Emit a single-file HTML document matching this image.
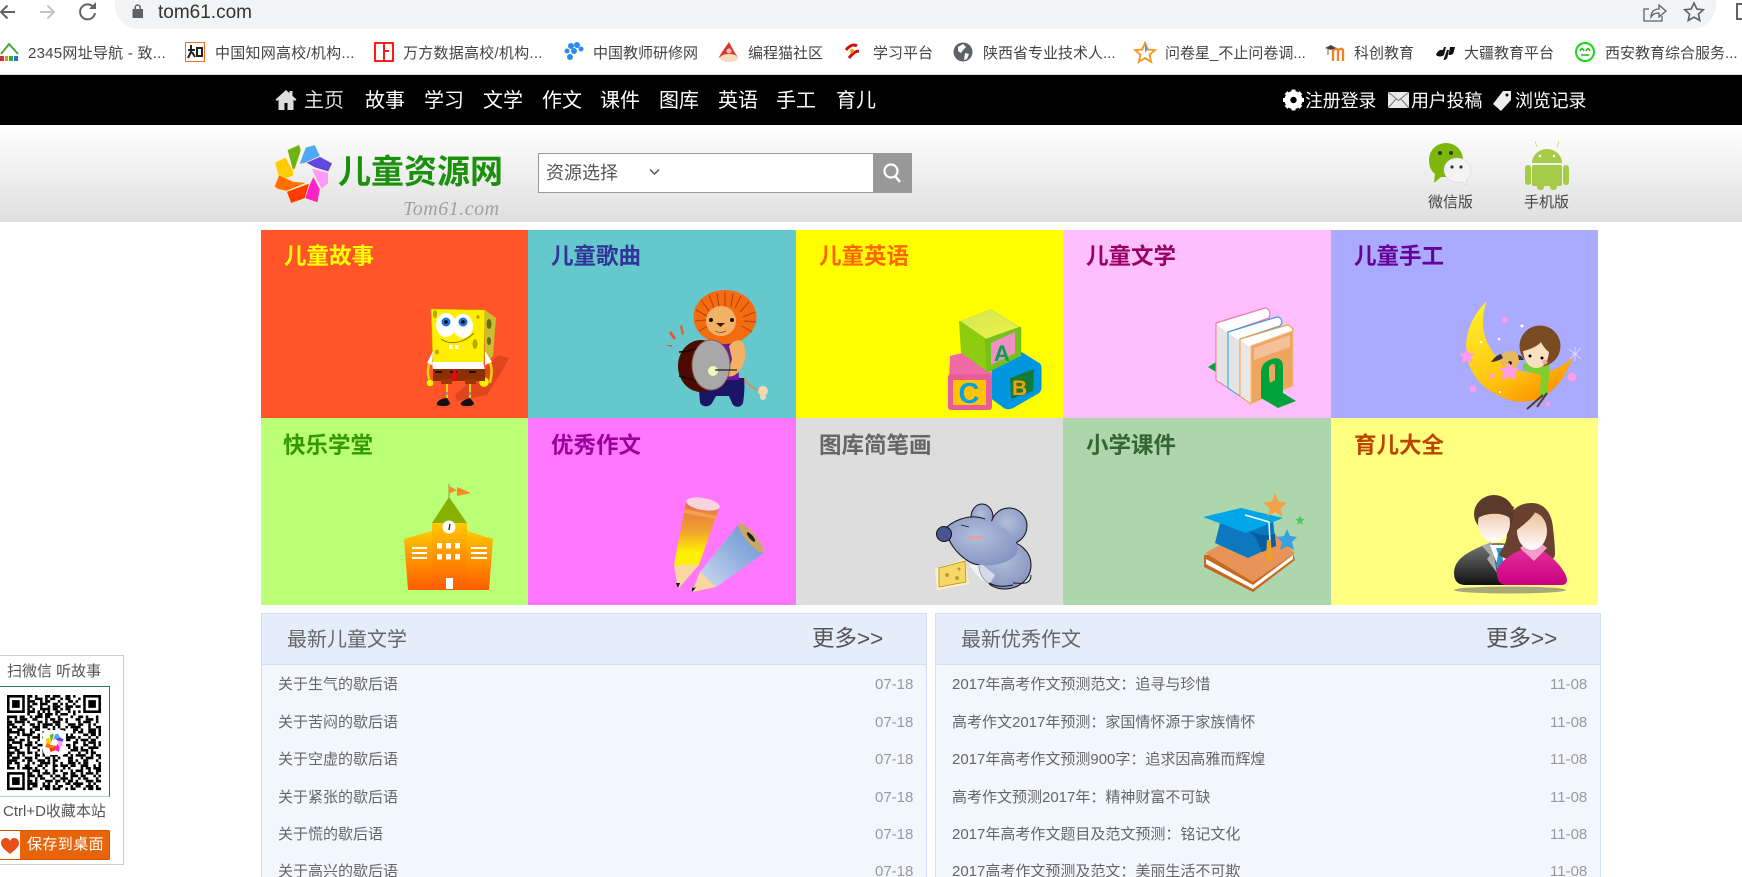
<!DOCTYPE html>
<html lang="zh"><head><meta charset="utf-8"><title>儿童资源网</title>
<style>
html,body{margin:0;padding:0;width:1742px;height:877px;overflow:hidden;background:#fff}
body{position:relative;font-family:"Liberation Sans","Noto Sans CJK SC",sans-serif}
#w{position:absolute;left:0;top:0;width:1742px;height:877px;overflow:hidden;filter:blur(.3px)}
#w>div,.a{position:absolute;white-space:nowrap}
svg{position:absolute;overflow:visible}
.b{font-size:15px;line-height:20px;top:43.5px;color:#444}
.n{font-size:20px;line-height:50px;top:76px;color:#fff}
.r{font-size:18px;line-height:50px;top:76px;color:#fff;letter-spacing:-.2px}
.c{width:268px;height:188px}
.t{font-size:22.5px;font-weight:700;line-height:30px;letter-spacing:0}
.p{background:#f2f7fe;border:1px solid #d3dff5;box-sizing:border-box;height:280px}
.h{background:#e5ecfa;border-bottom:1px solid #d3dff5;height:50px;position:absolute;left:0;right:0;top:0}
.l{font-size:15px;line-height:20px;color:#666}
.d{font-size:15px;line-height:20px;color:#999}
</style></head><body><div id="w">

<div style="left:115px;top:-20px;width:1601px;height:49px;background:#f1f3f4;border-radius:0 0 24px 24px"></div>
<div style="left:158px;top:1px;font-size:19px;line-height:24px;color:#333">tom61.com</div>

<div class="b" style="left:28px;letter-spacing:.25px">2345网址导航 - 致...</div>
<div class="b" style="left:215px;letter-spacing:.25px">中国知网高校/机构...</div>
<div class="b" style="left:403px;letter-spacing:.25px">万方数据高校/机构...</div>
<div class="b" style="left:593px">中国教师研修网</div>
<div class="b" style="left:748px">编程猫社区</div>
<div class="b" style="left:873px">学习平台</div>
<div class="b" style="left:983px">陕西省专业技术人...</div>
<div class="b" style="left:1165px">问卷星_不止问卷调...</div>
<div class="b" style="left:1354px">科创教育</div>
<div class="b" style="left:1464px">大疆教育平台</div>
<div class="b" style="left:1605px">西安教育综合服务...</div>
<div style="left:0;top:74px;width:1742px;height:1px;background:#ddd"></div>

<div style="left:0;top:75px;width:1742px;height:50px;background:#000"></div>
<div class="n" style="left:304px;color:#ddd">主页</div>
<div class="n" style="left:365px">故事</div>
<div class="n" style="left:424px">学习</div>
<div class="n" style="left:483px">文学</div>
<div class="n" style="left:542px">作文</div>
<div class="n" style="left:600px">课件</div>
<div class="n" style="left:659px">图库</div>
<div class="n" style="left:718px">英语</div>
<div class="n" style="left:776px">手工</div>
<div class="n" style="left:836px">育儿</div>
<div class="r" style="left:1305px">注册登录</div>
<div class="r" style="left:1411px">用户投稿</div>
<div class="r" style="left:1515px">浏览记录</div>

<div style="left:0;top:125px;width:1742px;height:97px;background:linear-gradient(#fff,#dfdfdf)"></div>
<div style="left:338px;top:151px;font-size:33px;font-weight:700;line-height:42px;color:#1b900c">儿童资源网</div>
<div style="left:403px;top:197px;font-family:'Liberation Serif',serif;font-style:italic;font-size:20px;line-height:24px;letter-spacing:.5px;color:#a0a0a0">Tom61.com</div>
<div style="left:538px;top:153px;width:336px;height:40px;box-sizing:border-box;background:#fff;border:1px solid #999"></div>
<div style="left:546px;top:160px;font-size:18px;line-height:26px;color:#555">资源选择</div>
<div style="left:873px;top:153px;width:39px;height:40px;background:#999"></div>
<div style="left:1428px;top:193px;font-size:15px;line-height:20px;color:#444">微信版</div>
<div style="left:1524px;top:193px;font-size:15px;line-height:20px;color:#444">手机版</div>

<div class="c" style="left:261px;top:230px;background:#ff5528"></div>
<div class="c" style="left:528px;top:230px;background:#64c8cc"></div>
<div class="c" style="left:796px;top:230px;background:#ff0"></div>
<div class="c" style="left:1063px;top:230px;background:#ffbfff"></div>
<div class="c" style="left:1331px;top:230px;width:267px;background:#aaf"></div>
<div class="c" style="left:261px;top:418px;height:187px;background:#bf7"></div>
<div class="c" style="left:528px;top:418px;height:187px;background:#f7f"></div>
<div class="c" style="left:796px;top:418px;height:187px;background:#ddd"></div>
<div class="c" style="left:1063px;top:418px;height:187px;background:#aed6ac"></div>
<div class="c" style="left:1331px;top:418px;height:187px;width:267px;background:#ffff80"></div>
<div class="t" style="left:284px;top:242px;color:#ff0">儿童故事</div>
<div class="t" style="left:551px;top:242px;color:#339">儿童歌曲</div>
<div class="t" style="left:819px;top:242px;color:#f60">儿童英语</div>
<div class="t" style="left:1086px;top:242px;color:#906">儿童文学</div>
<div class="t" style="left:1354px;top:242px;color:#609">儿童手工</div>
<div class="t" style="left:283px;top:431px;color:#390">快乐学堂</div>
<div class="t" style="left:551px;top:431px;color:#909">优秀作文</div>
<div class="t" style="left:819px;top:431px;color:#666">图库简笔画</div>
<div class="t" style="left:1086px;top:431px;color:#363">小学课件</div>
<div class="t" style="left:1354px;top:431px;color:#b40">育儿大全</div>

<div class="p" style="left:261px;top:613px;width:666px"><div class="h"></div></div>
<div class="p" style="left:935px;top:613px;width:666px"><div class="h"></div></div>
<div style="left:287px;top:626px;font-size:20px;line-height:28px;color:#666">最新儿童文学</div>
<div style="left:961px;top:626px;font-size:20px;line-height:28px;color:#666">最新优秀作文</div>
<div style="left:812px;top:624px;font-size:22.5px;line-height:30px;color:#555">更多&gt;&gt;</div>
<div style="left:1486px;top:624px;font-size:22.5px;line-height:30px;color:#555">更多&gt;&gt;</div>

<div class="l" style="left:278px;top:675px">关于生气的歇后语</div><div class="d" style="left:875px;top:675px">07-18</div>
<div class="l" style="left:278px;top:713px">关于苦闷的歇后语</div><div class="d" style="left:875px;top:713px">07-18</div>
<div class="l" style="left:278px;top:750px">关于空虚的歇后语</div><div class="d" style="left:875px;top:750px">07-18</div>
<div class="l" style="left:278px;top:788px">关于紧张的歇后语</div><div class="d" style="left:875px;top:788px">07-18</div>
<div class="l" style="left:278px;top:825px">关于慌的歇后语</div><div class="d" style="left:875px;top:825px">07-18</div>
<div class="l" style="left:278px;top:862px">关于高兴的歇后语</div><div class="d" style="left:875px;top:862px">07-18</div>

<div class="l" style="left:952px;top:675px">2017年高考作文预测范文：追寻与珍惜</div><div class="d" style="left:1550px;top:675px">11-08</div>
<div class="l" style="left:952px;top:713px">高考作文2017年预测：家国情怀源于家族情怀</div><div class="d" style="left:1550px;top:713px">11-08</div>
<div class="l" style="left:952px;top:750px">2017年高考作文预测900字：追求因高雅而辉煌</div><div class="d" style="left:1550px;top:750px">11-08</div>
<div class="l" style="left:952px;top:788px">高考作文预测2017年：精神财富不可缺</div><div class="d" style="left:1550px;top:788px">11-08</div>
<div class="l" style="left:952px;top:825px">2017年高考作文题目及范文预测：铭记文化</div><div class="d" style="left:1550px;top:825px">11-08</div>
<div class="l" style="left:952px;top:862px">2017高考作文预测及范文：美丽生活不可欺</div><div class="d" style="left:1550px;top:862px">11-08</div>

<div style="left:-1px;top:655px;width:125px;height:210px;box-sizing:border-box;border:1px solid #ccc;background:#fff"></div>
<div style="left:7px;top:662px;font-size:15px;line-height:20px;color:#555">扫微信 听故事</div>
<div style="left:-1px;top:686px;width:111px;height:111px;box-sizing:border-box;border-top:1px solid #2a7a6a;border-right:1.5px solid #2a7a6a;border-bottom:1px solid #b8cfc9;background:#fff"></div>
<div style="left:3px;top:802px;font-size:15px;line-height:20px;color:#555">Ctrl+D收藏本站</div>
<div style="left:-1px;top:830px;width:111px;height:30px;background:#e8640a;border-radius:2px;box-shadow:inset 0 0 0 1px #d25500"></div>
<div style="left:0;top:831px;width:20px;height:28px;background:#fff"></div>
<div style="left:27px;top:834px;font-size:15px;line-height:22px;letter-spacing:.4px;color:#fff">保存到桌面</div>

<svg style="left:0;top:0" width="1742" height="877" viewBox="0 0 1742 877">
<defs>
<linearGradient id="gs" x1="0" y1="0" x2="0" y2="1"><stop offset="0" stop-color="#ffc800"/><stop offset="1" stop-color="#ff5c00"/></linearGradient>
<linearGradient id="gm" x1="0" y1="0" x2=".6" y2="1"><stop offset="0" stop-color="#fff428"/><stop offset=".7" stop-color="#ffc410"/><stop offset="1" stop-color="#ff9800"/></linearGradient>
<linearGradient id="gp" x1="0" y1="0" x2="0" y2="1"><stop offset="0" stop-color="#e8704a"/><stop offset=".45" stop-color="#f0a030"/><stop offset=".8" stop-color="#fff000"/></linearGradient>
<linearGradient id="gb" x1="0" y1="1" x2="1" y2="0"><stop offset="0" stop-color="#cdd8f0"/><stop offset="1" stop-color="#5f8fd0"/></linearGradient>
<linearGradient id="gf" x1="0" y1="0" x2="0" y2="1"><stop offset="0" stop-color="#eebf98"/><stop offset="1" stop-color="#fff"/></linearGradient>
<linearGradient id="gd" x1="0" y1="0" x2="0" y2="1"><stop offset="0" stop-color="#777"/><stop offset="1" stop-color="#111"/></linearGradient>
<linearGradient id="gk" x1="0" y1="0" x2="0" y2="1"><stop offset="0" stop-color="#e8309c"/><stop offset="1" stop-color="#c80080"/></linearGradient>
<linearGradient id="gt" x1="0" y1="0" x2="1" y2="1"><stop offset="0" stop-color="#d6e850"/><stop offset="1" stop-color="#eef24a"/></linearGradient>
<radialGradient id="gr" cx=".45" cy=".4" r=".65"><stop offset="0" stop-color="#b4bedc"/><stop offset="1" stop-color="#8494c0"/></radialGradient>
</defs>

<!-- browser chrome icons -->
<g fill="none" stroke="#5f6368" stroke-width="2">
<path d="M15 12H1M7.500 5.500L1 12l6.500 6.500"/>
<path stroke="#c2c4c7" d="M40 12h14M47.500 5.500L54 12l-6.500 6.500"/>
<path d="M94 8A7.500 7.500 0 1 0 95 13"/><path fill="#5f6368" stroke="none" d="M89 9h7V2z"/>
<path stroke-width="1.300" d="M1649 9h-5v12h18v-5M1651 17c0-5 3-8 8-8V5l7 6-7 6v-4c-4 0-6 1-8 4z"/>
<path stroke-width="1.600" d="M1694 3l2.800 6 6.500.7-4.900 4.400 1.400 6.400-5.800-3.300-5.800 3.300 1.400-6.400-4.900-4.400 6.500-.7z"/>
<path stroke-width="2" d="M1743 4h-6v15h6"/>
</g>
<path fill="#5f6368" d="M132.500 9h10.500v9h-10.500zM134.500 9V7.500a3.200 3.200 0 0 1 6.400 0V9h-1.500V7.500a1.700 1.700 0 0 0-3.400 0V9z"/>

<!-- bookmark icons -->
<path fill="none" stroke="#4ba33c" stroke-width="2" d="M1 54l8-10 9 10"/><path fill="#c33" d="M0 56h4v5H0z"/><path fill="#d90" d="M5 56h3v5H5z"/><path fill="#3a3" d="M9 56h4v5H9z"/><path fill="#27c" d="M14 56h4v5h-4z"/>
<rect x="185.500" y="42.500" width="19" height="19" fill="#fff" stroke="#f07020"/><path fill="none" stroke="#222" stroke-width="2" d="M188 50h7M191 45v7l-3 6M192 52l3 5M197 48h5v8h-5z"/>
<path fill="none" stroke="#f00" stroke-width="1.800" d="M375 43h18v18h-18zM384 43v18M384 51h5"/>
<g fill="#2a8cf0"><circle cx="571" cy="46" r="3"/><circle cx="577" cy="45" r="3"/><circle cx="581" cy="49" r="2.500"/><circle cx="574" cy="51" r="3"/><circle cx="567" cy="51" r="2.500"/><circle cx="570" cy="57" r="3"/></g>
<path fill="#d43a2a" d="M729 42l6 11 3 4-4 4h-10l-5-4 3-5z"/><ellipse cx="729" cy="58" rx="9" ry="4" fill="#f3dcc0"/><circle cx="729" cy="51" r="2.500" fill="#fbb"/>
<path fill="none" stroke="#d01010" stroke-width="3" d="M846 50c4-5 8-6 11-4M849 58c3-4 6-7 10-7"/><circle cx="852" cy="51" r="2" fill="#f0a000"/>
<circle cx="963" cy="52" r="9.500" fill="#5f6368"/><path fill="#fff" d="M958 47l5-3 3 3-3 3-2 3-3-2zM965 53l4 1-2 5-3 1z"/>
<path fill="none" stroke="#f59a30" stroke-width="2" d="M1145 43l2.800 6.500 7 .7-5.300 4.600 1.600 7-6.100-3.700-6.100 3.700 1.600-7-5.300-4.600 7-.7z"/><path fill="#3a9cf0" d="M1145 43l2.500 6.500-2.500 3z"/>
<path fill="none" stroke="#f08020" stroke-width="2.300" d="M1333 61v-11M1333 51c2-3 5-3 5 0v10M1338 51c2-3 5-3 5 0v10"/><path fill="#444" d="M1325 48l6-3 5 3-5 2z"/><path stroke="#666" fill="none" d="M1328 49v6"/>
<path fill="#111" d="M1436 55c1-4 5-6 7-5l1-3h2l-2 8c-2 2-6 2-8 0zM1447 50h2l-1.500 7c-.5 2-2 3-4 3zM1450 47h5l-1.500 6c-1 2-3 2-5 2z"/>
<circle cx="1585" cy="52" r="9" fill="#fff" stroke="#18d818" stroke-width="2"/><path fill="none" stroke="#18b818" stroke-width="1.500" d="M1580 51c1-3 3-3 4 0M1586 51c1-3 3-3 4 0M1581 55h8"/>

<!-- nav icons -->
<path fill="#ddd" d="M286 90l-10.500 9.500 1.500 1.500 1.500-1.300V110h6v-7h3v7h6V99.700l1.500 1.300 1.500-1.500-4-3.600V91h-3v2.200z"/>
<g transform="translate(1293.500 100)"><circle r="6.500" fill="none" stroke="#fff" stroke-width="5"/><g fill="#fff"><rect x="-2" y="-10.500" width="4" height="21"/><rect x="-2" y="-10.500" width="4" height="21" transform="rotate(45)"/><rect x="-2" y="-10.500" width="4" height="21" transform="rotate(90)"/><rect x="-2" y="-10.500" width="4" height="21" transform="rotate(135)"/></g><circle r="3.200" fill="#000"/></g>
<rect x="1388" y="92" width="21" height="16" fill="#e8e8e8"/><path fill="none" stroke="#777" d="M1388 92l10.500 8.500L1409 92M1388 108l8-9M1409 108l-8-9"/>
<path fill="#eee" d="M1503 91h8v9l-10 11-8-7z"/><circle cx="1507" cy="95" r="1.500" fill="#000"/>

<!-- logo -->
<g transform="translate(265 130) scale(.3333)" stroke="#fff6c0" stroke-width="1.500" stroke-linejoin="round">
<polygon fill="#ffcc00" points="30,98 62,82 85,125 85,137 60,147 42,145"/>
<polygon fill="#6eb410" points="67,60 103,44 108,62 90,116 83,120"/>
<polygon fill="#50a8f8" points="122,52 150,45 165,78 118,100 103,102"/>
<polygon fill="#6048e0" points="123,98 165,80 202,100 190,125 150,113"/>
<polygon fill="#ff98ff" points="140,115 190,128 190,160 170,178 148,135"/>
<polygon fill="#ff20c8" points="145,140 165,178 158,218 120,205 133,165"/>
<polygon fill="#ff3c00" points="133,160 120,205 78,220 65,185"/>
<polygon fill="#ff7000" points="28,170 42,135 85,155 125,158 65,183 40,178"/>
</g>

<!-- search -->
<path fill="none" stroke="#555" stroke-width="1.500" d="M650 169.500l4.500 4.500 4.500-4.500"/>
<circle cx="891" cy="171" r="6.500" fill="none" stroke="#fff" stroke-width="2.200"/><path stroke="#fff" stroke-width="2.500" d="M895 176l5 6"/>

<!-- wechat -->
<path fill="#7cb70a" d="M1446 143c9 0 17 7 17 17 0 11-8 17-17 17-2 0-4 0-5 0l-7 6 1-9c-4-3-6-8-6-14 0-10 8-17 17-17z"/>
<circle cx="1440" cy="153" r="2" fill="#333"/><circle cx="1451" cy="153" r="2" fill="#333"/>
<path fill="#f4f4f4" stroke="#ccc" stroke-width=".5" d="M1457 158c8 0 14 6 14 12 0 5-2 8-5 10l1 5-6-3c-8 2-17-4-17-12 0-7 6-12 13-12z"/>
<circle cx="1452" cy="167" r="1.600" fill="#333"/><circle cx="1461" cy="167" r="1.600" fill="#333"/>

<!-- android -->
<g fill="#a6cb48"><path d="M1532 163a15 14 0 0 1 30 0z"/><rect x="1532" y="165" width="30" height="21" rx="2"/><rect x="1525" y="165" width="6" height="20" rx="3"/><rect x="1563" y="165" width="6" height="20" rx="3"/><rect x="1537" y="182" width="7" height="8" rx="3"/><rect x="1550" y="182" width="7" height="8" rx="3"/></g>
<path stroke="#c4d88a" stroke-width="1" d="M1537 147l-2-6M1557 147l2-6"/><circle cx="1540" cy="156" r="1.300" fill="#fff"/><circle cx="1554" cy="156" r="1.300" fill="#fff"/>

<!-- spongebob -->
<g transform="translate(425 307)">
<path fill="#e0461e" d="M30 88l44-40 10 3-8 15-14 22-30 6z"/>
<path fill="#c9c030" d="M60 3l11 8-3 38-8 7z"/><ellipse cx="64" cy="17" rx="2.500" ry="5" fill="#6a6a10"/><ellipse cx="64" cy="34" rx="2" ry="4" fill="#6a6a10"/>
<path fill="#ffee00" stroke="#c0b000" stroke-width=".6" d="M6 2l54 1-1 53-51 1z"/>
<g fill="#b5a800"><ellipse cx="10" cy="7" rx="2" ry="4"/><ellipse cx="50" cy="37" rx="2.500" ry="5"/><ellipse cx="12" cy="45" rx="2" ry="2.500"/><ellipse cx="53" cy="10" rx="1.500" ry="2"/></g>
<ellipse cx="21" cy="18" rx="10" ry="12" fill="#fff"/><ellipse cx="38" cy="19" rx="10" ry="12" fill="#fff"/>
<circle cx="21" cy="15" r="4.500" fill="#1c72d8"/><circle cx="38" cy="15" r="4.500" fill="#1c72d8"/><circle cx="21" cy="15" r="1.800"/><circle cx="38" cy="15" r="1.800"/>
<path fill="none" stroke="#8a7a00" stroke-width="1" d="M16 32c8 6 22 5 33-6"/><rect x="24" y="38" width="3.500" height="4" fill="#fff"/><rect x="30" y="38" width="3.500" height="4" fill="#fff"/>
<path fill="#fff" d="M7 55l51 0 2 8H8z"/><path fill="#fff" d="M8 44l-6 12 5 2zM60 44l7 11-7 3z"/>
<path fill="none" stroke="#e8d800" stroke-width="2.500" d="M4 57c-2 7-1 14 2 20M65 56c3 7 1 14 0 20"/><circle cx="5" cy="76" r="3.500" fill="#ffee00" stroke="#a09000" stroke-width=".5"/><circle cx="59" cy="75" r="5" fill="#ffee00" stroke="#a09000" stroke-width=".5"/>
<path fill="#8c3000" d="M8 62h52v12H8z"/><rect x="16" y="72" width="11" height="5" fill="#9c3808"/><rect x="40" y="72" width="11" height="5" fill="#9c3808"/>
<path fill="#111" d="M10 64h7v2h-7zM25 64h7v2h-7zM44 64h7v2h-7z"/><path fill="#f00010" d="M27 62h5l-1 3 2 6-3.500 3-3.500-3 2-6z"/>
<path stroke="#eecf00" stroke-width="2" d="M22 77v14M45 77v14"/><path stroke="#8888cc" stroke-width="2" d="M22 85v3M45 85v3"/>
<path fill="#111" d="M12 96c2-4 8-5 10-5l3 5c0 2-2 3-6 3s-8 0-7-3zM36 96c2-3 6-4 9-5l4 5c0 2-2 3-6 3s-8 0-7-3z"/>
</g>

<!-- lion -->
<g transform="translate(665 290)">
<path fill="#f05030" d="M4 43l5 7 2-2-5-7zM15 36l2 9 2-1-2-9zM0 55l7 2 0-2z"/>
<path fill="none" stroke="#f08040" stroke-width="1.500" d="M79 88c3 6 10 12 20 14"/><circle cx="98" cy="101" r="5" fill="#f4d8b0"/><circle cx="98" cy="107" r="3" fill="#f4d8b0"/>
<path fill="#1c1464" d="M33 88h46c1 10 0 18-1 25-2 5-9 5-11 0l-3-7H51l-4 7c-3 5-11 4-12-1z"/>
<path fill="#6a1a9c" d="M49 48h23l2 42H49z"/>
<ellipse cx="60" cy="27" rx="31.500" ry="27" fill="#f46c12"/>
<g stroke="#b83c08" stroke-width="1" fill="none"><path d="M60 2v15M52 3l2 14M68 3l-2 14M44 5l5 13M76 6l-6 12M36 10l8 11M84 12l-9 10M31 20l11 6M90 22l-12 5M30 31l11-1M91 32l-12-1M34 41l9-5M87 42l-10-6"/></g>
<ellipse cx="56" cy="31" rx="15" ry="15" fill="#f2b266"/>
<circle cx="46" cy="30" r="2" fill="#111"/><circle cx="67" cy="30" r="2" fill="#111"/><path fill="#3a1a10" d="M51 33h9l-4.500 4z"/><path fill="none" stroke="#a06030" d="M50 41c3 2 7 2 11 0"/>
<path fill="#f2b266" d="M64 56c7-8 13-7 15-1 4 10 0 24-9 30-5 3-9 1-11-2 4-4 7-8 8-14z"/>
<ellipse cx="36" cy="76" rx="23" ry="26" fill="#4c0a00"/><path stroke="#1c0500" stroke-width="1.500" fill="none" d="M14 62c6 0 14-2 22-5M14 86c6 1 14 4 20 7"/>
<ellipse cx="46" cy="75" rx="19" ry="25" fill="#a8a8a8" stroke="#8c5a50"/>
<circle cx="48" cy="81" r="5" fill="#f0f8c0"/><path stroke="#222" stroke-width="1.300" d="M50 80l22 0"/>
</g>

<!-- blocks -->
<g transform="translate(948 310)" stroke-linejoin="round">
<path fill="#0096e0" stroke="#0096e0" stroke-width="3" d="M45 50l26-8 19 12c2 1 2 3 2 5v19c0 2-1 3-2 4l-26 15c-3 1-5 1-7 0l-12-9z"/>
<path fill="#107c38" d="M62 68l24-9-1 22-22 8z"/><text x="64" y="85" font-family="Liberation Sans" font-weight="700" font-size="21" fill="#ffa000">B</text>
<path fill="#f06aa8" d="M2 46l12-3 30 20v6H1z"/>
<rect x="0" y="64" width="44" height="36" rx="3" fill="#e85c98"/><rect x="5" y="70" width="33" height="25" fill="#ffc400"/><text x="10.500" y="93" font-family="Liberation Sans" font-weight="700" font-size="29" fill="#00a0e8">C</text>
<path fill="url(#gt)" stroke="#d6e850" stroke-width="2" d="M12 12L43 0l29 18-34 12z"/>
<path fill="#8ecc10" stroke="#8ecc10" stroke-width="2" d="M12 12l26 18 2 31L14 42z"/>
<path fill="#76c01a" stroke="#76c01a" stroke-width="2.500" d="M38 30l34-12 0 27-32 16z"/>
<path fill="#f090c4" d="M43 33l24-11 0 21-24 12z"/><text x="46" y="51" font-family="Liberation Sans" font-weight="700" font-size="22" fill="#00a050">A</text>
</g>

<!-- books -->
<g transform="translate(1208 308)">
<path fill="#00a33a" d="M0 59l8-5v10z"/>
<path fill="#fff" stroke="#f07aa8" stroke-width="1.200" d="M8 15L57 0c3 0 5 3 5 6l-1 4-41 14v56L8 72z"/>
<path fill="#e4e4e4" d="M9 17l10 7v55l-10-8z"/>
<path fill="#fff" stroke="#3aa0e0" stroke-width="1.200" d="M20 24l49-15c3 0 5 2 5 6l-2 3-40 13v57l-12-8z"/>
<path fill="#e4e4e4" d="M21 26l10 6v55l-10-7z"/>
<path fill="#fff" stroke="#f09a50" stroke-width="1.200" d="M32 31l47-14c3 0 6 3 6 6L43 38v58l-11-8z"/>
<path fill="#e8e8e8" d="M33 33l9 6v55l-9-7z"/>
<path fill="#eda560" stroke="#f6c080" stroke-width=".8" d="M43 38l42-15v55L43 96z"/>
<path fill="#f4c09a" d="M46 40l36-13v12l-36 13z"/>
<path fill="#00a33a" d="M53 66c0-10 5-13 11-15 6-2 11 0 11 8v26l13 8-18 7-17-10z"/><path fill="#eda560" d="M61 61c0-3 2-5 4-5s2 2 2 4v12l-5 3c-1-4-1-9-1-14z"/>
</g>

<!-- moon -->
<g transform="translate(1463 301)">
<path fill="url(#gm)" d="M24 0C-8 30-6 85 50 100c30 5 50-15 60-45-15 17-36 20-56 14C28 60 12 30 24 0z"/>
<path fill="#7bd030" d="M60 63l18-3 9 4-3 30-7 2 1-22-18-5z"/>
<path stroke="#5a3a20" stroke-width="2" fill="none" d="M80 94l-16 14M84 92l-10 14"/>
<circle cx="77" cy="45" r="20.500" fill="#7a4a20"/><path fill="#fbe0c0" d="M60 50c6-1 15-5 18-9 2 4 5 8 8 10-1 11-6 16-13 16s-12-7-13-17z"/>
<circle cx="67" cy="55" r="1.500"/><circle cx="79" cy="57" r="1.500"/><circle cx="82" cy="61" r="2.500" fill="#f8a0a0"/>
<ellipse cx="47" cy="59" rx="10" ry="9" fill="#e8b860"/><path d="M38 53c-4 1-8 5-10 8 4 0 9-2 12-4z" fill="#333"/><path d="M55 54c3 0 5 3 6 5l-5 0z" fill="#333"/><circle cx="47" cy="62" r="1.800"/>
<g fill="#ff9ce6"><path d="M46 61l3 6 7 0-4.500 5 2 7-7.500-3-7.500 3 2-7-4.500-5 7 0z"/><path d="M4 47l2.500 5 5.500 .5-4 4 1.500 6-5.500-3-5.500 3 1.500-6-4-4 5.500-.5z"/><circle cx="42" cy="19" r="3"/><circle cx="10" cy="88" r="3.500"/><circle cx="109" cy="76" r="4.500"/><circle cx="85" cy="103" r="2.500"/><circle cx="29" cy="75" r="2.500"/></g>
<g fill="#fff"><circle cx="59" cy="25" r="1.500"/><circle cx="36" cy="38" r="1.300"/><circle cx="18" cy="41" r="1.300"/><circle cx="37" cy="91" r="1"/></g>
<g stroke="#e4e0ff" stroke-width=".8"><path d="M109 53l6 0M112 46l0 14M106 48l12 10M118 47l-11 11"/></g>
</g>

<!-- school -->
<g transform="translate(404 484)">
<path stroke="#8a7a50" stroke-width=".8" d="M45 0v14"/><path fill="#ff8a20" d="M45 2l8 4-8 4zM53 3l14 6-14 3z"/>
<path fill="url(#gs)" d="M0 55l28-8v59H4z"/><path fill="url(#gs)" d="M89 55l-26-8v59h22z"/><path fill="url(#gs)" d="M28 39h35v67H28z"/>
<path fill="#88b000" d="M28 39L45 13l18 26z"/>
<circle cx="45" cy="43" r="6.500" fill="#fff"/><path stroke="#222" stroke-width="1.300" d="M45 46l1-6"/>
<g fill="#fff"><rect x="33" y="59" width="5" height="5.500"/><rect x="42" y="59" width="5" height="5.500"/><rect x="51" y="59" width="5" height="5.500"/><rect x="33" y="70" width="5" height="5.500"/><rect x="42" y="70" width="5" height="5.500"/><rect x="51" y="70" width="5" height="5.500"/><rect x="42" y="94" width="7" height="11"/>
<rect x="8" y="63" width="15" height="2"/><rect x="8" y="68" width="15" height="2"/><rect x="8" y="73" width="15" height="2"/><rect x="67" y="63" width="16" height="2"/><rect x="67" y="68" width="16" height="2"/><rect x="67" y="73" width="16" height="2"/></g>
</g>

<!-- pencils -->
<g transform="translate(674 495)">
<path fill="url(#gp)" d="M12 7l33 6-20 57L0 70z"/><path fill="#f8d8a0" d="M0 70l25 0L4 94z"/><path fill="#111" d="M2 88l4 0-2 5z"/>
<path fill="#f4a050" d="M11 14l32 7-1 3-32-6z"/><ellipse cx="29" cy="9" rx="17" ry="6" fill="#f8d4e0" transform="rotate(10 29 9)"/>
<path fill="url(#gb)" d="M65 29l25 29-48 34-16-15z"/><path fill="#f8d8a0" d="M26 77l16 15-24 5z"/><path fill="#111" d="M18 93l4-.5-4 4.500z"/>
<ellipse cx="77" cy="43" rx="5" ry="19" fill="#c8a868" transform="rotate(-40 77 43)"/><ellipse cx="77" cy="42" rx="2" ry="6" fill="#222" transform="rotate(-40 77 42)"/>
</g>

<!-- mouse -->
<g transform="translate(935 503)" stroke="#111" stroke-width="1">
<ellipse cx="47" cy="14" rx="11" ry="13" fill="url(#gr)"/><ellipse cx="74" cy="23" rx="18" ry="18" fill="url(#gr)"/>
<ellipse cx="70" cy="62" rx="26" ry="24" fill="url(#gr)"/>
<path fill="url(#gr)" d="M8 28C16 18 34 10 50 16c16 4 32 18 33 30 0 10-18 18-38 16C30 60 14 44 8 28z" stroke="none"/>
<path fill="none" d="M8 28C16 18 34 10 50 16M44 62C30 60 18 46 14 36"/>
<path fill="#fff" stroke="none" opacity=".6" d="M34 62c6 8 10 14 20 20l6-10-12-10z"/>
<circle cx="9" cy="31" r="7.500" fill="#4a5490"/>
<path fill="none" d="M78 80c8 0 18 3 18-8M54 80c8 4 14 4 24 2"/>
<path fill="#fff2c0" stroke="none" d="M0 66l30-10 4 25-32 6z"/>
<path fill="#f5d868" d="M4 65l26-7 1 21-27 5z" stroke="#b09020" stroke-width=".8"/><g fill="#c09a30" stroke="none"><circle cx="12" cy="72" r="2"/><circle cx="22" cy="75" r="2"/><circle cx="24" cy="66" r="1.500"/></g>
<path fill="#e0a0a8" stroke="none" d="M32 33h16v3H32z"/>
<path fill="none" stroke-width=".8" d="M26 22l8 2"/>
</g>

<!-- cap -->
<g transform="translate(1203 493)">
<path fill="#c86820" d="M1 62v12l49 25 42-32-2-7z"/><path fill="#fff" d="M3 66l47 26 40-30v4L50 96 3 71z"/><path fill="#e89458" d="M2 60l58-31 32 31-42 29z"/>
<path fill="#0c78c0" d="M18 26l-6 24 33 15 28-13-3-24z"/><path fill="#085ea0" d="M40 33c6 4 14 12 32 8l1 12-14 6-6-14z"/>
<path fill="#00a6e8" d="M0 24l38-9 42 10-37 15z"/>
<path stroke="#fff" stroke-width="1.500" fill="none" d="M42 22l24 7 1 20"/><path fill="#f0a020" d="M64 47h4l1 20-3 2-3-2z"/>
<path fill="#f4a248" d="M72 0l3.500 8.500 8.500 1-6.500 6 2 8-7.500-4.500-7.500 4.500 2-8-6.500-6 8.500-1z"/>
<path fill="#3aa0e0" d="M84 36l3 7 7 1-5 5 2 8-7-4-7 4 2-8-5-5 7-1z"/>
<path fill="#50c860" d="M97 22l1.200 3.500 3.500.5-2.700 2.500.8 3.500-2.800-2-2.800 2 .8-3.500-2.700-2.500 3.500-.5z"/>
</g>

<!-- couple -->
<g transform="translate(1454 495)">
<ellipse cx="56" cy="95" rx="56" ry="3.500" fill="#a8a878"/>
<path fill="url(#gd)" d="M0 78c0-14 14-21 30-28 10-3 24-3 34 3l8 37H12C4 90 0 86 0 78z"/>
<path fill="#aaa" d="M28 51l9-4 2 7 4 24-10-14 3-4zM62 52l-8-5-3 7-1 22z"/>
<path fill="#fff" d="M36 50h20l-9 30z"/><path fill="#2c96c8" d="M42 53h8l-2 6 2 12-4 9-4-9 2-12z"/>
<path fill="#6a4030" d="M76 0c-18 0-25 12-25 30 0 12-7 18-8 22 8 6 22 8 38 7 12-1 18-2 18-8 0-8-1-18-2-26 C96 10 88 0 76 0z" transform="translate(2 8)"/>
<ellipse cx="40" cy="19" rx="20" ry="19" fill="#5a3a2a"/><ellipse cx="40" cy="28" rx="16" ry="19" fill="url(#gf)"/><path fill="#5a3a2a" d="M23 24c6-6 26-8 34 0l3-12-20-10-17 10z"/>
<path fill="url(#gk)" d="M43 80c-2-14 20-24 34-29l10 4c12 6 26 22 26 30 0 4-3 5-6 5H52c-5 0-9-4-9-10z"/>
<path fill="#f0a0c8" d="M66 53l14 13 13-13-5-4H71z"/>
<ellipse cx="78" cy="36" rx="15" ry="19" fill="url(#gf)"/><path fill="#6a4030" d="M62 36c3-3 14-10 20-20-8-2-18 2-22 10z"/>
</g>

<!-- QR -->
<g transform="translate(7 695) scale(2.54 2.57)" fill="none" stroke="#000">
<path stroke-dasharray="2 1 1 3 2 1 3 2" d="M8 .500H29"/><path stroke-dasharray="1 2 3 1 1 1 2 2 1" d="M8 1.500H29"/><path stroke-dasharray="3 2 1 1 2 3 1" d="M8 2.500H29"/><path stroke-dasharray="1 1 2 1 3 2 2 1 1" d="M8 3.500H29"/><path stroke-dasharray="2 3 1 2 1 1 3" d="M8 4.500H29"/><path stroke-dasharray="1 1 1 2 4 1 2" d="M8 5.500H29"/><path stroke-dasharray="3 1 1 1 1 1 1 2 2" d="M8 6.500H29"/><path stroke-dasharray="1 3 2 1 3 1 1" d="M8 7.500H29"/>
<path stroke-dasharray="4 1 2 2 1 1 3 1 2 3 1" d="M0 8.500H37"/><path stroke-dasharray="1 2 1 1 3 2 2 3 1 1 2" d="M0 9.500H37"/><path stroke-dasharray="2 1 4 1 1 3 2 1 1 2 3" d="M0 10.500H37"/><path stroke-dasharray="3 3 1 2 2 1 1 1 4 1 2" d="M0 11.500H37"/><path stroke-dasharray="1 1 2 1 1 4 3 1 2 2 1" d="M0 12.500H37"/><path stroke-dasharray="2 2 3 2 1 1 2 3 1 1 1" d="M0 13.500H37"/><path stroke-dasharray="5 1 1 2 2 3 1 1 2 1 2" d="M0 14.500H37"/><path stroke-dasharray="1 3 1 1 4 2 1 2 1 3 1" d="M0 15.500H37"/><path stroke-dasharray="2 1 1 4 1 1 3 1 2 1 2" d="M0 16.500H37"/><path stroke-dasharray="3 2 2 1 1 3 1 2 3 1 1" d="M0 17.500H37"/><path stroke-dasharray="1 1 4 2 2 1 1 3 1 2 2" d="M0 18.500H37"/><path stroke-dasharray="2 3 1 1 3 2 2 1 1 3 1" d="M0 19.500H37"/><path stroke-dasharray="4 1 1 2 1 1 2 4 1 1 2" d="M0 20.500H37"/><path stroke-dasharray="1 2 2 3 1 3 1 1 3 2 1" d="M0 21.500H37"/><path stroke-dasharray="3 1 3 1 2 1 1 2 2 1 4" d="M0 22.500H37"/><path stroke-dasharray="2 2 1 1 1 4 2 1 1 2 3" d="M0 23.500H37"/><path stroke-dasharray="1 1 3 2 3 1 1 3 2 1 1" d="M0 24.500H37"/><path stroke-dasharray="4 2 1 1 2 2 3 1 1 1 2" d="M0 25.500H37"/><path stroke-dasharray="2 1 2 3 1 1 1 2 4 1 1" d="M0 26.500H37"/><path stroke-dasharray="1 3 1 2 2 3 2 1 1 2 2" d="M0 27.500H37"/><path stroke-dasharray="3 1 1 1 4 1 1 2 1 3 1" d="M0 28.500H37"/>
<path stroke-dasharray="1 1 3 2 1 2 2 1 1 3" d="M8 29.500H37"/><path stroke-dasharray="2 2 1 1 3 1 1 3 2 1" d="M8 30.500H37"/><path stroke-dasharray="3 1 2 3 1 1 2 1 1 2" d="M8 31.500H37"/><path stroke-dasharray="1 2 1 1 2 3 1 2 3 1" d="M8 32.500H37"/><path stroke-dasharray="2 1 1 3 3 1 2 1 1 1" d="M8 33.500H37"/><path stroke-dasharray="4 2 1 1 1 2 1 3 2 1" d="M8 34.500H37"/><path stroke-dasharray="1 1 2 2 3 1 1 1 2 3" d="M8 35.500H37"/><path stroke-dasharray="2 3 1 1 2 1 3 2 1 1" d="M8 36.500H37"/>
<g stroke-width="1"><rect x=".5" y=".5" width="6" height="6"/><rect x="30.500" y=".5" width="6" height="6"/><rect x=".5" y="30.500" width="6" height="6"/></g>
<g fill="#000" stroke="none"><rect x="2" y="2" width="3" height="3"/><rect x="32" y="2" width="3" height="3"/><rect x="2" y="32" width="3" height="3"/></g>
</g>
<rect x="43" y="730" width="23" height="25" rx="4" fill="#fff"/>
<g transform="translate(54.500 742.500) scale(.105) translate(-115 -130)" stroke="none">
<polygon fill="#ffcc00" points="30,98 62,82 85,125 85,137 60,147 42,145"/>
<polygon fill="#6eb410" points="67,60 103,44 108,62 90,116 83,120"/>
<polygon fill="#50a8f8" points="122,52 150,45 165,78 118,100 103,102"/>
<polygon fill="#6048e0" points="123,98 165,80 202,100 190,125 150,113"/>
<polygon fill="#ff98ff" points="140,115 190,128 190,160 170,178 148,135"/>
<polygon fill="#ff20c8" points="145,140 165,178 158,218 120,205 133,165"/>
<polygon fill="#ff3c00" points="133,160 120,205 78,220 65,185"/>
<polygon fill="#ff7000" points="28,170 42,135 85,155 125,158 65,183 40,178"/>
</g>

<!-- heart -->
<path fill="#e8501a" d="M10 854c-5-4-9-7-9-11 0-3 2-5 5-5 2 0 3 1 4 3 1-2 2-3 4-3 3 0 5 2 5 5 0 4-4 7-9 11z"/>
</svg>
</div></body></html>
